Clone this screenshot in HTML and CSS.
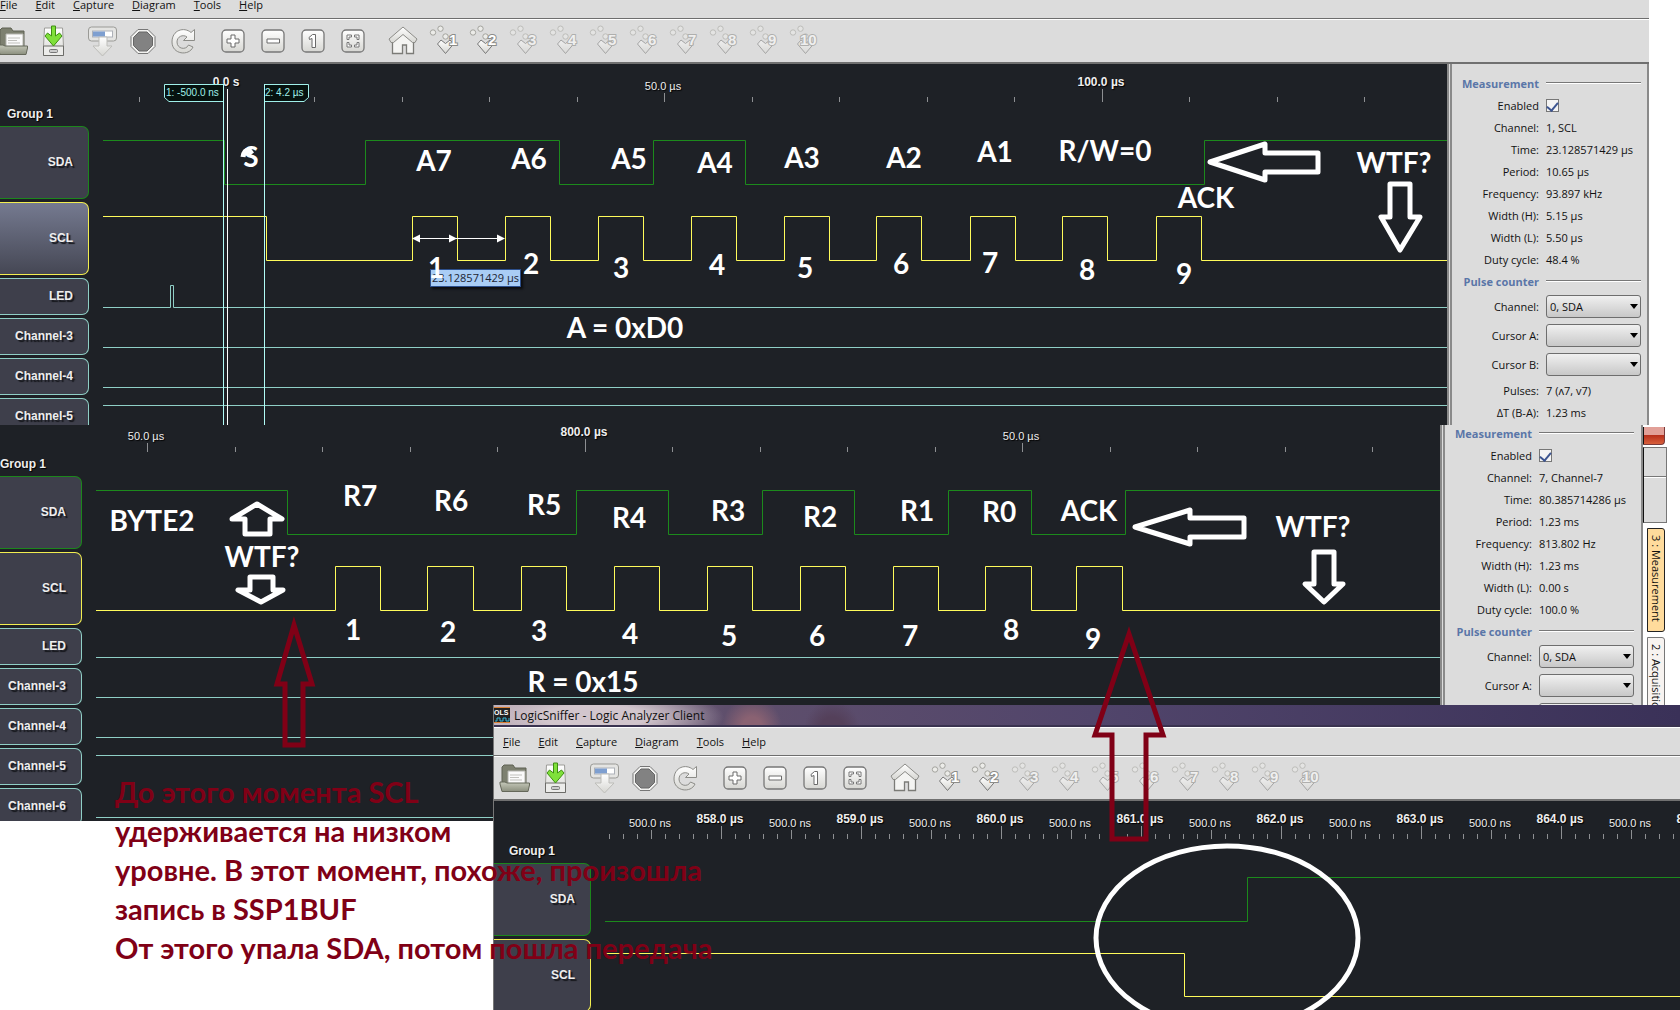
FILE: index.html
```html
<!DOCTYPE html>
<html lang="ru">
<head>
    <meta charset="UTF-8">
    <meta name="viewport" content="width=device-width, initial-scale=1.0">
    <title>LogicSniffer - Logic Analyzer Client</title>
    <link rel="stylesheet" href="styles.css">
</head>
<body>
    <!-- Shared toolbar icons -->
    <svg class="defs" aria-hidden="true">
        <defs>
            <linearGradient id="soft" x1="0" y1="0" x2="0" y2="1">
                <stop offset="0" stop-color="#fff"/>
                <stop offset="1" stop-color="#d6d6d2"/>
            </linearGradient>
            <linearGradient id="drawer" x1="0" y1="0" x2="0" y2="1">
                <stop offset="0" stop-color="#c6c9ba"/>
                <stop offset="1" stop-color="#8b8f7e"/>
            </linearGradient>
            <symbol id="i-open" viewBox="0 0 32 32">
                <path d="M3 27V5l2-2h9l2 3h11v18z" fill="#7d8070" stroke="#5e6152"/>
                <path d="M9 9h17v14H9z" fill="#fafafa" stroke="#b4b4ae"/>
                <path d="M11 13h12M11 15.500h9M11 18h12" stroke="#c0c0bc"/>
                <path d="M1 20h5l2 1h22.500v2L29 29.500H3L1 22z" fill="url(#drawer)" stroke="#65685a"/>
            </symbol>
            <symbol id="i-save" viewBox="0 0 32 32">
                <path d="M7.500 3h18l1 18v9.500h-20V21z" fill="url(#soft)" stroke="#9c9c98"/>
                <path d="M6.500 21h20v9.500h-20z" fill="#ececea" stroke="#6c6c68"/>
                <rect x="12.500" y="24.500" width="8" height="3" rx="1" fill="#ccc" stroke="#777"/>
                <path d="M14.500 1h4v10l4-3 2.500 3-8.500 10L8 11l2.500-3 4 3z" fill="#7fe03a" stroke="#3f8f12"/>
            </symbol>
            <symbol id="i-capture" viewBox="0 0 32 32">
                <rect x="1.500" y="2" width="28" height="14" rx="3" fill="#e4e4e2" stroke="#9a9a96"/>
                <rect x="5.500" y="6" width="20" height="6" fill="#fff" stroke="#adb1b8"/>
                <path d="M6 6.500h12v5H6z" fill="#7e9fd0"/>
                <path d="M12 12h8v9h5l-9.500 10L6 21h6z" fill="url(#soft)" stroke="#bdbdb9"/>
            </symbol>
            <symbol id="i-stop" viewBox="0 0 32 32">
                <path d="M11 4.500h10l7 7v10l-7 7H11l-7-7v-10z" fill="#f2f2f0" stroke="#777"/>
                <path d="M12 7h8l5.500 5.500v8L20 26h-8l-5.500-5.500v-8z" fill="#828282" stroke="#666"/>
            </symbol>
            <symbol id="i-reload" viewBox="0 0 32 32">
                <path d="M24 7.500l3.500-3v11h-11l3.500-3.500c-4-3-10-.5-10 5 0 7 9 8.500 11.500 3l4.500 2c-4 9.500-21 7.500-21-5C5 5 17 1.500 24 7.500z" fill="url(#soft)" stroke="#8c8c88"/>
            </symbol>
            <symbol id="i-tile" viewBox="0 0 32 32">
                <rect x="5" y="5" width="22" height="22" rx="4" fill="url(#soft)" stroke="#777" stroke-width="1.300"/>
            </symbol>
            <symbol id="i-in" viewBox="0 0 32 32">
                <use href="#i-tile"/>
                <path d="M14 10h4v4h4v4h-4v4h-4v-4h-4v-4h4z" fill="#fff" stroke="#6a6a6a"/>
            </symbol>
            <symbol id="i-out" viewBox="0 0 32 32">
                <use href="#i-tile"/>
                <path d="M10 14h12.500v4H10z" fill="#fff" stroke="#6a6a6a"/>
            </symbol>
            <symbol id="i-one" viewBox="0 0 32 32">
                <use href="#i-tile"/>
                <path d="M12 12.500l3.500-3h3v13H15v-9l-2.500 1z" fill="#fff" stroke="#6a6a6a"/>
            </symbol>
            <symbol id="i-fit" viewBox="0 0 32 32">
                <use href="#i-tile"/>
                <path d="M10 14.500V10h4.500v2H12v2.500zM17.500 10H22v4.500h-2V12h-2.500zM10 17.500h2V20h2.500v2H10zM20 17.500h2V22h-4.500v-2H20z" fill="#fff" stroke="#777"/>
            </symbol>
            <symbol id="i-home" viewBox="0 0 32 32">
                <path d="M5.500 17L16 8l10.500 9v11.500h-7V20h-4v8.500H5.500z" fill="#f4f4f2" stroke="#7b7b77" stroke-width="1.300"/>
                <path d="M16 2l14 12-2 3.500h-2.500L16 9.500 6.500 17.500H4L2 14z" fill="url(#soft)" stroke="#8c8c88"/>
            </symbol>
            <symbol id="i-mark" viewBox="0 0 32 32">
                <g fill="#ecece9" stroke="#a3a39e">
                    <circle cx="6" cy="7.500" r="2.700"/>
                    <circle cx="13.500" cy="3.700" r="2.700"/>
                    <circle cx="18.500" cy="11.500" r="2.700"/>
                </g>
                <path d="M10.500 19l3.500-4 4.500 3.500L23 15l3.500 4-8 9.500z" fill="url(#soft)" stroke="#777"/>
            </symbol>
        </defs>
    </svg>

    <!-- First capture: address byte -->
    <section class="window window-address">
        <nav class="menu">
            <a href="#"><u>F</u>ile</a>
            <a href="#"><u>E</u>dit</a>
            <a href="#"><u>C</u>apture</a>
            <a href="#"><u>D</u>iagram</a>
            <a href="#"><u>T</u>ools</a>
            <a href="#"><u>H</u>elp</a>
        </nav>
        <div class="toolbar">
            <div class="tools">
                <button aria-label="Open"><svg><use href="#i-open"/></svg></button>
                <button aria-label="Save"><svg><use href="#i-save"/></svg></button>
            </div>
            <div class="tools">
                <button aria-label="Begin capture"><svg><use href="#i-capture"/></svg></button>
                <button aria-label="Stop capture"><svg><use href="#i-stop"/></svg></button>
                <button aria-label="Repeat capture"><svg><use href="#i-reload"/></svg></button>
            </div>
            <div class="tools">
                <button aria-label="Zoom in"><svg><use href="#i-in"/></svg></button>
                <button aria-label="Zoom out"><svg><use href="#i-out"/></svg></button>
                <button aria-label="Zoom original"><svg><use href="#i-one"/></svg></button>
                <button aria-label="Zoom to fit"><svg><use href="#i-fit"/></svg></button>
            </div>
            <div class="tools">
                <button aria-label="Go to trigger"><svg><use href="#i-home"/></svg></button>
                <button><svg><use href="#i-mark"/><text x="22" y="20">1</text></svg></button>
                <button><svg><use href="#i-mark"/><text x="21" y="20">2</text></svg></button>
                <button disabled><svg><use href="#i-mark"/><text x="21" y="20">3</text></svg></button>
                <button disabled><svg><use href="#i-mark"/><text x="21" y="20">4</text></svg></button>
                <button disabled><svg><use href="#i-mark"/><text x="21" y="20">5</text></svg></button>
                <button disabled><svg><use href="#i-mark"/><text x="21" y="20">6</text></svg></button>
                <button disabled><svg><use href="#i-mark"/><text x="21" y="20">7</text></svg></button>
                <button disabled><svg><use href="#i-mark"/><text x="21" y="20">8</text></svg></button>
                <button disabled><svg><use href="#i-mark"/><text x="21" y="20">9</text></svg></button>
                <button disabled><svg><use href="#i-mark"/><text x="13" y="20">10</text></svg></button>
            </div>
        </div>
        <div class="content">
            <div class="canvas">
                <div class="channels">
                    <h2>Group 1</h2>
                    <div class="channel tall sda">SDA</div>
                    <div class="channel tall scl selected">SCL</div>
                    <div class="channel">LED</div>
                    <div class="channel">Channel-3</div>
                    <div class="channel">Channel-4</div>
                    <div class="channel">Channel-5</div>
                </div>
                <svg class="plot">
                    <g transform="translate(0 -64)">
                        <path class="tick" d="M139.500 97v5M314.500 97v5M402.500 97v5M489.500 97v5M577.500 97v5M664.500 93v9M752.500 97v5M839.500 97v5M927.500 97v5M1014.500 97v5M1102.500 89v13M1189.500 97v5M1277.500 97v5M1364.500 97v5"/>
                        <text class="major" x="226" y="86">0.0 s</text>
                        <text class="minor" x="663" y="90">50.0 µs</text>
                        <text class="major" x="1101" y="86">100.0 µs</text>
                        <path class="wave sda" d="M103 140.500H224.500V184.500H365.500V140.500H559.500V184.500H653.500V140.500H745.500V184.500H1204.500V140.500H4000"/>
                        <path class="wave scl" d="M103 216.500H266.500V260.500H412.500V216.500H457.500V260.500H505.500V216.500H550.500V260.500H598.500V216.500H643.500V260.500H691.500V216.500H736.500V260.500H784.500V216.500H829.500V260.500H876.500V216.500H921.500V260.500H970.500V216.500H1015.500V260.500H1062.500V216.500H1107.500V260.500H1156.500V216.500H1201.500V260.500H4000"/>
                        <path class="wave" d="M103 307.500H170.500V285.500H173.500V307.500H4000M103 347.500H4000M103 387.500H4000M103 405.500H4000"/>
                        <!-- Cursors and trigger -->
                        <path class="flag" d="M223.500 84.500H164.500V97.500L169 101.500H223.500"/>
                        <path class="flag" d="M264.500 84.500H308.500V97.500L304 101.500H264.500"/>
                        <path class="cursor" d="M223.500 84V500M264.500 84V500"/>
                        <path class="trigger" d="M227.500 89V500"/>
                        <text class="flag-text" x="166" y="96">1: -500.0 ns</text>
                        <text class="flag-text" x="265" y="96">2: 4.2 µs</text>
                        <!-- Measured period -->
                        <path class="trigger" d="M414 238.500H504"/>
                        <path class="heads" d="M412 238.500l8-4v8zM457 238.500l-8-4v8zM505 238.500l-8-4v8z"/>
                    </g>
                </svg>
                <div class="tip">23.128571429 µs</div>
            </div>
            <form class="panel">
                <h3>Measurement</h3><hr>
                <label for="enabled1">Enabled</label><input type="checkbox" id="enabled1" checked>
                <span>Channel:</span><output>1, SCL</output>
                <span>Time:</span><output>23.128571429 µs</output>
                <span>Period:</span><output>10.65 µs</output>
                <span>Frequency:</span><output>93.897 kHz</output>
                <span>Width (H):</span><output>5.15 µs</output>
                <span>Width (L):</span><output>5.50 µs</output>
                <span>Duty cycle:</span><output>48.4 %</output>
                <h3>Pulse counter</h3><hr>
                <label for="channel1">Channel:</label><div class="select"><select id="channel1"><option>0, SDA</option></select></div>
                <label for="cursorA1">Cursor A:</label><div class="select"><select id="cursorA1"><option></option></select></div>
                <label for="cursorB1">Cursor B:</label><div class="select"><select id="cursorB1"><option></option></select></div>
                <span>Pulses:</span><output>7 (ʌ7, v7)</output>
                <span>ΔT (B-A):</span><output>1.23 ms</output>
            </form>
        </div>
    </section>

    <!-- Second capture: register byte -->
    <section class="window window-register">
        <div class="content">
            <div class="canvas">
                <div class="channels">
                    <h2>Group 1</h2>
                    <div class="channel tall sda">SDA</div>
                    <div class="channel tall scl">SCL</div>
                    <div class="channel">LED</div>
                    <div class="channel">Channel-3</div>
                    <div class="channel">Channel-4</div>
                    <div class="channel">Channel-5</div>
                    <div class="channel">Channel-6</div>
                </div>
                <svg class="plot">
                    <g transform="translate(0 -425)">
                        <path class="tick" d="M147.500 443v9M235.500 447v5M322.500 447v5M410.500 447v5M497.500 447v5M585.500 439v13M672.500 447v5M760.500 447v5M847.500 447v5M935.500 447v5M1022.500 443v9M1110.500 447v5M1197.500 447v5M1285.500 447v5M1372.500 447v5"/>
                        <text class="minor" x="146" y="440">50.0 µs</text>
                        <text class="major" x="584" y="436">800.0 µs</text>
                        <text class="minor" x="1021" y="440">50.0 µs</text>
                        <path class="wave sda" d="M96 490.500H287.500V534.500H576.500V490.500H668.500V534.500H762.500V490.500H854.500V534.500H948.500V490.500H1031.500V534.500H1125.500V490.500H4000"/>
                        <path class="wave scl" d="M96 610.500H335.500V566.500H380.500V610.500H427.500V566.500H473.500V610.500H521.500V566.500H566.500V610.500H614.500V566.500H659.500V610.500H707.500V566.500H752.500V610.500H800.500V566.500H845.500V610.500H893.500V566.500H938.500V610.500H985.500V566.500H1031.500V610.500H1076.500V566.500H1122.500V610.500H4000"/>
                        <path class="wave" d="M96 657.500H4000M96 697.500H4000M96 737.500H4000M96 755.500H4000M96 817.500H4000"/>
                    </g>
                </svg>
            </div>
            <form class="panel">
                <h3>Measurement</h3><hr>
                <label for="enabled2">Enabled</label><input type="checkbox" id="enabled2" checked>
                <span>Channel:</span><output>7, Channel-7</output>
                <span>Time:</span><output>80.385714286 µs</output>
                <span>Period:</span><output>1.23 ms</output>
                <span>Frequency:</span><output>813.802 Hz</output>
                <span>Width (H):</span><output>1.23 ms</output>
                <span>Width (L):</span><output>0.00 s</output>
                <span>Duty cycle:</span><output>100.0 %</output>
                <h3>Pulse counter</h3><hr>
                <label for="channel2">Channel:</label><div class="select"><select id="channel2"><option>0, SDA</option></select></div>
                <label for="cursorA2">Cursor A:</label><div class="select"><select id="cursorA2"><option></option></select></div>
                <label for="cursorB2">Cursor B:</label><div class="select"><select id="cursorB2"><option></option></select></div>
            </form>
            <div class="edge">
                <button class="close" aria-label="Close"></button>
                <div class="frame"></div>
                <button class="tab active">3 : Measurement</button>
                <button class="tab">2 : Acquisition</button>
            </div>
        </div>
    </section>

    <!-- Third capture: zoomed at the end of the byte -->
    <section class="window window-zoomed">
        <header class="title">
            <svg viewBox="0 0 16 16" aria-hidden="true">
                <path d="M0 0h16v16H0z" fill="#222"/>
                <path d="M0 .500h16M0 15.500h16" stroke="#d98032"/>
                <text x="0" y="8">OLS</text>
                <path d="M1 14h2v-3h3v3h3v-3h3v3h3v-3" fill="none" stroke="#35b6d6"/>
            </svg>
            <h1>LogicSniffer - Logic Analyzer Client</h1>
        </header>
        <nav class="menu">
            <a href="#"><u>F</u>ile</a>
            <a href="#"><u>E</u>dit</a>
            <a href="#"><u>C</u>apture</a>
            <a href="#"><u>D</u>iagram</a>
            <a href="#"><u>T</u>ools</a>
            <a href="#"><u>H</u>elp</a>
        </nav>
        <div class="toolbar">
            <div class="tools">
                <button aria-label="Open"><svg><use href="#i-open"/></svg></button>
                <button aria-label="Save"><svg><use href="#i-save"/></svg></button>
            </div>
            <div class="tools">
                <button aria-label="Begin capture"><svg><use href="#i-capture"/></svg></button>
                <button aria-label="Stop capture"><svg><use href="#i-stop"/></svg></button>
                <button aria-label="Repeat capture"><svg><use href="#i-reload"/></svg></button>
            </div>
            <div class="tools">
                <button aria-label="Zoom in"><svg><use href="#i-in"/></svg></button>
                <button aria-label="Zoom out"><svg><use href="#i-out"/></svg></button>
                <button aria-label="Zoom original"><svg><use href="#i-one"/></svg></button>
                <button aria-label="Zoom to fit"><svg><use href="#i-fit"/></svg></button>
            </div>
            <div class="tools">
                <button aria-label="Go to trigger"><svg><use href="#i-home"/></svg></button>
                <button><svg><use href="#i-mark"/><text x="22" y="20">1</text></svg></button>
                <button><svg><use href="#i-mark"/><text x="21" y="20">2</text></svg></button>
                <button disabled><svg><use href="#i-mark"/><text x="21" y="20">3</text></svg></button>
                <button disabled><svg><use href="#i-mark"/><text x="21" y="20">4</text></svg></button>
                <button disabled><svg><use href="#i-mark"/><text x="21" y="20">5</text></svg></button>
                <button disabled><svg><use href="#i-mark"/><text x="21" y="20">6</text></svg></button>
                <button disabled><svg><use href="#i-mark"/><text x="21" y="20">7</text></svg></button>
                <button disabled><svg><use href="#i-mark"/><text x="21" y="20">8</text></svg></button>
                <button disabled><svg><use href="#i-mark"/><text x="21" y="20">9</text></svg></button>
                <button disabled><svg><use href="#i-mark"/><text x="13" y="20">10</text></svg></button>
            </div>
        </div>
        <div class="content">
            <div class="canvas">
                <div class="channels">
                    <h2>Group 1</h2>
                    <div class="channel tall sda">SDA</div>
                    <div class="channel tall scl">SCL</div>
                </div>
                <svg class="plot">
                    <g transform="translate(-494 -801)">
                        <path class="tick-row small" d="M609 836.500H2000"/>
                        <path class="tick-row mid" d="M651 834.500H2000"/>
                        <path class="tick-row big" d="M721 832.500H2000"/>
                        <text class="minor" x="650" y="827">500.0 ns</text>
                        <text class="major" x="720" y="823">858.0 µs</text>
                        <text class="minor" x="790" y="827">500.0 ns</text>
                        <text class="major" x="860" y="823">859.0 µs</text>
                        <text class="minor" x="930" y="827">500.0 ns</text>
                        <text class="major" x="1000" y="823">860.0 µs</text>
                        <text class="minor" x="1070" y="827">500.0 ns</text>
                        <text class="major" x="1140" y="823">861.0 µs</text>
                        <text class="minor" x="1210" y="827">500.0 ns</text>
                        <text class="major" x="1280" y="823">862.0 µs</text>
                        <text class="minor" x="1350" y="827">500.0 ns</text>
                        <text class="major" x="1420" y="823">863.0 µs</text>
                        <text class="minor" x="1490" y="827">500.0 ns</text>
                        <text class="major" x="1560" y="823">864.0 µs</text>
                        <text class="minor" x="1630" y="827">500.0 ns</text>
                        <text class="major" x="1700" y="823">865.0 µs</text>
                        <path class="wave sda" d="M605 921.500H1247.500V877.500H4000"/>
                        <path class="wave scl" d="M605 953.500H1184.500V996.500H4000"/>
                    </g>
                </svg>
            </div>
        </div>
    </section>

    <!-- Hand-made notes over the captures -->
    <svg class="notes">
        <g class="words">
            <text x="251" y="167">S</text>
            <text x="434" y="171">A7</text>
            <text x="529" y="169">A6</text>
            <text x="629" y="169">A5</text>
            <text x="715" y="173">A4</text>
            <text x="802" y="168">A3</text>
            <text x="904" y="168">A2</text>
            <text x="995" y="162">A1</text>
            <text x="1105" y="161">R/W=0</text>
            <text x="1206" y="208">ACK</text>
            <text x="1394" y="173">WTF?</text>
            <text x="436" y="278">1</text>
            <text x="531" y="274">2</text>
            <text x="621" y="278">3</text>
            <text x="717" y="275">4</text>
            <text x="805" y="278">5</text>
            <text x="901" y="274">6</text>
            <text x="990" y="273">7</text>
            <text x="1087" y="280">8</text>
            <text x="1184" y="284">9</text>
            <text x="625" y="338">A = 0xD0</text>

            <text x="152" y="531">BYTE2</text>
            <text x="262" y="567">WTF?</text>
            <text x="360" y="506">R7</text>
            <text x="451" y="511">R6</text>
            <text x="544" y="515">R5</text>
            <text x="629" y="528">R4</text>
            <text x="728" y="521">R3</text>
            <text x="820" y="527">R2</text>
            <text x="917" y="521">R1</text>
            <text x="999" y="522">R0</text>
            <text x="1089" y="521">ACK</text>
            <text x="1313" y="537">WTF?</text>
            <text x="353" y="640">1</text>
            <text x="448" y="642">2</text>
            <text x="539" y="641">3</text>
            <text x="630" y="644">4</text>
            <text x="729" y="646">5</text>
            <text x="817" y="646">6</text>
            <text x="910" y="646">7</text>
            <text x="1011" y="640">8</text>
            <text x="1093" y="649">9</text>
            <text x="583" y="692">R = 0x15</text>
        </g>
        <g class="arrows">
            <path d="M243 157q1-7 6-7l3 4"/>
            <path d="M1210 162L1265 144V153H1318V172H1265V180z"/>
            <path d="M1390 184H1410V217H1420L1400 250 1381 217H1390z"/>
            <path d="M1135 527L1190 510V518H1244V537H1190V544z"/>
            <path d="M1314 552H1334V584H1343L1324 602 1305 584H1314z"/>
            <path d="M257 504L282 519H270V534H245V519H232z"/>
            <path d="M250 577H273V590H283L261 602 238 590H250z"/>
            <ellipse cx="1227" cy="938" rx="131" ry="92"/>
        </g>
        <g class="arrows red">
            <path d="M294 625L312 684H303V745H285V684H277z"/>
            <path d="M1129 634L1163 735H1146V839H1112V735H1095z"/>
        </g>
    </svg>
    <p class="remark">До этого момента SCL<br>удерживается на низком<br>уровне. В этот момент, похоже, произошла<br>запись в SSP1BUF<br>От этого упала SDA, потом пошла передача</p>
</body>
</html>
```
FILE: styles.css
```css
* {
    box-sizing: border-box;
}
body {
    margin: 0;
    min-height: 100vh;
    position: relative;
    overflow: hidden;
    background: #fff;
    color: #111;
    font-family: "Open Sans", "Noto Sans", sans-serif;
    font-size: 11px;
}
h1, h2, h3, p {
    margin: 0;
}
button {
    border: none;
    padding: 0;
    background: none;
    font: inherit;
}
.defs {
    position: absolute;
    width: 0;
    height: 0;
}

/* Windows */
.window {
    position: absolute;
    display: flex;
    flex-direction: column;
    overflow: hidden;
}
.window-address {
    top: 0;
    left: 0;
    right: 31px;
    height: 425px;
}
.window-register {
    top: 425px;
    left: 0;
    right: 13px;
    height: 396px;
}
.window-zoomed {
    top: 705px;
    left: 493px;
    right: 0;
    bottom: 0;
    border-left: 1px solid #777;
}
.title {
    display: flex;
    align-items: center;
    gap: 4px;
    height: 22px;
    border-bottom: 2px solid #3a3350;
    background:
        radial-gradient(ellipse 130px 30px at 100px 12px, #d2c6cd 40%, transparent),
        radial-gradient(circle at 258px 22px, #8a6272 10px, transparent 30px),
        radial-gradient(circle at 338px 24px, #54405a 12px, transparent 28px),
        linear-gradient(90deg, #b9a9b5 0, #5f4f6c 230px, #51456b 600px, #3a3158);
}
.title svg {
    width: 16px;
    height: 16px;
}
.title text {
    font: bold 7px "Liberation Sans", sans-serif;
    fill: #fff;
}
.title h1 {
    font-size: 12px;
    font-weight: normal;
}
.menu {
    display: flex;
    align-items: center;
    gap: 18px;
    height: 29px;
    padding-left: 9px;
    background: #dcdcdc;
    border-top: 1px solid #fff;
    border-bottom: 1px solid #6e6e6e;
}
.window-address .menu {
    height: 19px;
    padding: 0 0 9px;
    border-top: none;
}
.menu a {
    color: #111;
    text-decoration: none;
}
.toolbar {
    display: flex;
    gap: 10px;
    height: 45px;
    padding-left: 1px;
    background: #dcdcdc;
    border-top: 1px solid #fff;
    border-bottom: 2px solid #707070;
}
.window-address .toolbar {
    margin-left: -8px;
}
.tools {
    display: flex;
}
.tools button {
    display: grid;
    place-items: center;
    width: 40px;
}
.tools button:disabled {
    opacity: 0.55;
}
.tools svg {
    width: 32px;
    height: 32px;
}
.tools text {
    font: bold 15px "Liberation Sans", sans-serif;
    fill: #fff;
    stroke: #8c8c88;
    stroke-width: 2px;
    paint-order: stroke;
}
.content {
    display: flex;
    flex: 1;
    min-height: 0;
}

/* Signal canvas */
.canvas {
    flex: 1;
    display: grid;
    position: relative;
    overflow: hidden;
    background: #1e2126;
    color: #eee;
    font-family: "Liberation Sans", Arial, sans-serif;
}
.channels, .plot {
    grid-area: 1 / 1;
}
.plot {
    width: 100%;
    height: 100%;
    min-height: 0;
}
.channels {
    display: flex;
    flex-direction: column;
    gap: 3px;
    width: 89px;
    height: 0;
    padding-top: 43px;
}
.channels h2 {
    flex: none;
    height: 16px;
    padding-left: 7px;
    font-size: 12px;
    line-height: 14px;
    text-shadow: 1px 1px 1px #000;
}
.channel {
    flex: none;
    display: flex;
    align-items: center;
    justify-content: flex-end;
    height: 37px;
    padding-right: 15px;
    padding-bottom: 2px;
    border: 1px solid #8fcfc6;
    border-left: none;
    border-radius: 0 7px 7px 0;
    background: #3e3f4b;
    font-size: 12px;
    font-weight: bold;
    text-shadow: 2px 2px 1px #16171c;
}
.channel.tall {
    height: 73px;
}
.channel.sda {
    border-color: #1c861c;
}
.channel.scl {
    border-color: #f2ee50;
}
.channel.selected {
    background: linear-gradient(#757a90, #454754);
}
.window-register .channels {
    width: 82px;
    padding-top: 32px;
}
.window-register .channels h2 {
    padding-left: 0;
}
.window-zoomed .channels {
    width: 97px;
}
.window-zoomed .channels h2 {
    padding-left: 15px;
}
.tick {
    stroke: #8d8f92;
}
.tick-row {
    stroke: #8d8f92;
    stroke-dasharray: 1 139;
}
.tick-row.small {
    stroke-width: 5px;
    stroke-dasharray: 1 13;
}
.tick-row.mid {
    stroke-width: 9px;
}
.tick-row.big {
    stroke-width: 13px;
}
.major, .minor {
    fill: #eee;
    font-size: 12px;
    text-anchor: middle;
    text-shadow: 1px 1px 1px #000;
}
.major {
    font-weight: bold;
}
.minor {
    font-size: 11px;
}
.wave {
    fill: none;
    stroke: #8fcfc6;
}
.wave.sda {
    stroke: #1c8a1c;
}
.wave.scl {
    stroke: #fffb5a;
}
.flag {
    fill: #06120f;
    stroke: #a0f0ea;
}
.flag-text {
    fill: #a0f0ea;
    font-size: 10px;
}
.cursor {
    stroke: #b0fbf6;
}
.trigger {
    stroke: #fff;
}
.heads {
    fill: #fff;
}
.tip {
    position: absolute;
    left: 430px;
    top: 205px;
    padding: 0 1px;
    border: 1px solid #2c4f8c;
    background: #a9cdf5;
    color: #1b2433;
    font-family: "Open Sans", "Noto Sans", sans-serif;
    line-height: 16px;
    box-shadow: 2px 2px 2px #0c0d10;
}

/* Measurement panel */
.panel {
    flex: none;
    display: grid;
    grid-template-columns: 1fr 95px;
    grid-template-rows: repeat(10, 22px) repeat(3, 29px);
    grid-auto-rows: 22px;
    column-gap: 7px;
    align-items: center;
    align-content: start;
    width: 202px;
    padding: 8px 6px 0 0;
    background: #dcdcdc;
    border-left: 5px double #8a8a8a;
    border-right: 2px solid #8a8a8a;
}
.window-register .panel {
    width: 203px;
    padding-top: 0;
    padding-right: 7px;
    margin-top: -3px;
}
.panel h3, .panel span, .panel label {
    text-align: right;
    white-space: nowrap;
}
.panel h3 {
    color: #5a76a8;
    font-size: 11px;
}
.panel output {
    white-space: nowrap;
}
.panel hr {
    width: 100%;
    margin: 0;
    border: none;
    border-top: 1px solid #777;
    border-bottom: 1px solid #fff;
}
.panel input {
    appearance: none;
    display: grid;
    place-items: center;
    width: 13px;
    height: 13px;
    margin: 0;
    border: 1px solid #777;
    background: #f4f4f4;
}
.panel input:checked::after {
    content: "";
    width: 5px;
    height: 9px;
    border: solid #3d5590;
    border-width: 0 2px 2px 0;
    transform: rotate(40deg);
}
.select {
    display: grid;
    align-items: center;
}
.select select, .select::after {
    grid-area: 1 / 1;
}
.select select {
    appearance: none;
    width: 100%;
    height: 23px;
    padding: 0 3px;
    border: 1px solid #6e6e6e;
    border-radius: 3px;
    background: linear-gradient(#f0f0f0, #c8c8c8);
    color: #111;
    font: inherit;
}
.select::after {
    content: "";
    justify-self: end;
    margin-right: 3px;
    border: 4px solid transparent;
    border-top: 5px solid #000;
    border-bottom: none;
    pointer-events: none;
}

/* Right edge with the docked tabs */
.edge {
    flex: none;
    display: flex;
    flex-direction: column;
    align-items: flex-end;
    width: 24px;
    padding-top: 2px;
    padding-right: 2px;
    background: #fff;
}
.close {
    flex: none;
    width: 22px;
    height: 18px;
    border: 1px solid #7a3a3a;
    border-top: none;
    border-left: 1px solid #111;
    border-radius: 0 0 4px 0;
    background: linear-gradient(#e2a098 45%, #b8301c 50%, #d8603c);
}
.frame {
    flex: none;
    width: 24px;
    height: 76px;
    margin: 2px -2px 5px 0;
    border: 1px solid #777;
    border-left: 1px solid #111;
    background: linear-gradient(#dcdcdc 28px, #777 28px 29px, #fff 29px 30px, #dcdcdc 30px);
}
.tab {
    flex: none;
    width: 18px;
    height: 104px;
    margin-bottom: 5px;
    padding-top: 6px;
    border: 1px solid #777;
    border-radius: 0 3px 3px 0;
    background: #f7f3f0;
    color: #111;
    text-align: left;
    white-space: nowrap;
    writing-mode: vertical-rl;
}
.tab.active {
    border-color: #222;
    background: #ffdb9c;
}

/* Notes drawn over everything */
.notes {
    position: absolute;
    inset: 0;
    width: 100%;
    height: 100%;
    pointer-events: none;
}
.words {
    fill: #fff;
    font: bold 28px Lato, sans-serif;
    text-anchor: middle;
}
.arrows {
    fill: none;
    stroke: #fff;
    stroke-width: 5px;
    stroke-linejoin: round;
}
.arrows.red {
    stroke: #800016;
    stroke-linejoin: miter;
}
.remark {
    position: absolute;
    left: 115px;
    top: 772px;
    color: #800016;
    font: bold 29px/39px Lato, sans-serif;
    white-space: nowrap;
}
```
